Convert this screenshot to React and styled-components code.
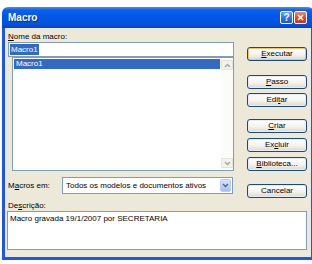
import React from 'react';
import styled, { createGlobalStyle } from 'styled-components';

const GlobalStyle = createGlobalStyle`
  body {
    margin: 0;
    background: #ffffff;
    overflow: hidden;
    font-family: "Liberation Sans", Arial, sans-serif;
    font-size: 8px;
    color: #000000;
  }
`;

const Page = styled.div`
  padding: 7px 0 0 2px;
`;

const Window = styled.div`
  width: 312px;
`;

const TitleBar = styled.div`
  height: 21px;
  display: flex;
  align-items: center;
  justify-content: space-between;
  padding: 0 7px 0 6px;
  border-radius: 6px 6px 0 0;
  background: linear-gradient(to bottom, #4a90f8 0%, #0d61ea 14%, #0057e6 45%, #0253df 80%, #0a44c8 100%);
`;

const TitleText = styled.span`
  color: #ffffff;
  font-weight: bold;
  font-size: 10px;
  text-shadow: 1px 1px 0 #0a2a8a;
`;

const TitleButtons = styled.div`
  display: flex;
  gap: 1px;
`;

const CaptionButton = styled.div`
  width: 13px;
  height: 13px;
  box-sizing: border-box;
  border: 1px solid #ffffff;
  border-radius: 2px;
  display: flex;
  align-items: center;
  justify-content: center;
  color: #ffffff;
  font-weight: bold;
  font-size: 10px;
  background: ${p => p.$close
    ? 'linear-gradient(to bottom, #f08a6e, #d8451f 60%, #c8381a)'
    : 'linear-gradient(to bottom, #6fa2fb, #2a6cf0 60%, #1b57de)'};
`;

const Frame = styled.div`
  background: #ece9d8;
  border: 3px solid #1f55ea;
  border-top: none;
  padding: 3px 0 7px 3px;
`;

const Main = styled.div`
  display: flex;
  gap: 13px;
`;

const LeftCol = styled.div`
  width: 226px;
  display: flex;
  flex-direction: column;
`;

const Label = styled.div`
  height: 11px;
  line-height: 11px;
  white-space: nowrap;
`;

const DescLabel = styled.div`
  margin-top: 3px;
  height: 10px;
  line-height: 10px;
  white-space: nowrap;
`;

const NameInput = styled.div`
  height: 15px;
  box-sizing: border-box;
  border: 1px solid #7f9db9;
  background: #ffffff;
  padding: 0 1px;
  display: flex;
  align-items: center;
`;

const Selected = styled.span`
  background: #316ac5;
  color: #ffffff;
  padding: 0 1px;
  line-height: 11px;
`;

const MacroList = styled.div`
  margin-left: 4px;
  width: 222px;
  height: 114px;
  box-sizing: border-box;
  border: 1px solid #7f9db9;
  background: #ffffff;
  display: flex;
`;

const ListItems = styled.div`
  flex: 1;
  padding: 1px;
`;

const ListItem = styled.div`
  height: 10px;
  line-height: 10px;
  padding-left: 2px;
  background: ${p => (p.$selected ? '#316ac5' : 'transparent')};
  color: ${p => (p.$selected ? '#ffffff' : '#000000')};
`;

const Scrollbar = styled.div`
  width: 12px;
  display: flex;
  flex-direction: column;
  justify-content: space-between;
  padding: 2px 0 2px;
  background: #fbfbf8;
`;

const ScrollArrow = styled.div`
  height: 8px;
  border: 1px solid #e4e4dc;
  border-radius: 1px;
  background: #f3f3ee;
  display: flex;
  align-items: center;
  justify-content: center;
`;

const ComboRow = styled.div`
  margin-top: 6px;
  display: flex;
  align-items: center;
`;

const ComboLabel = styled.div`
  width: 54px;
`;

const Combo = styled.div`
  width: 171px;
  height: 17px;
  box-sizing: border-box;
  border: 1px solid #7f9db9;
  background: #ffffff;
  display: flex;
  align-items: center;
`;

const ComboText = styled.span`
  flex: 1;
  padding-left: 3px;
  white-space: nowrap;
`;

const ComboButton = styled.div`
  width: 11px;
  height: 13px;
  margin-right: 1px;
  border-radius: 2px;
  border: 1px solid #b8cbf2;
  box-sizing: border-box;
  background: linear-gradient(to bottom, #d6e2fd, #b6cbf8 70%, #a5bdf3);
  display: flex;
  align-items: center;
  justify-content: center;
`;

const ButtonCol = styled.div`
  width: 60px;
  display: flex;
  flex-direction: column;
  padding-top: 16px;
`;

const Button = styled.div`
  height: 14px;
  margin-top: ${p => p.$gap || 0}px;
  box-sizing: border-box;
  border: 1px solid #1c4a7c;
  border-radius: 3px;
  background: linear-gradient(to bottom, #ffffff, #f4f3ee 55%, #dcd7cb);
  box-shadow: ${p => (p.$default ? 'inset 0 0 0 1px #f6c26a' : 'inset 0 0 0 1px #e6ecf7')};
  display: flex;
  align-items: center;
  justify-content: center;
  line-height: 10px;
`;

const DescBox = styled.div`
  margin-left: -1px;
  width: 300px;
  height: 39px;
  box-sizing: border-box;
  border: 1px solid #7f9db9;
  background: #ffffff;
  padding: 2px 2px;
  line-height: 10px;
`;

const Chevron = ({ dir = 'down', color = '#a7a69b' }) => (
  <svg width="7" height="5" viewBox="0 0 7 5">
    <polyline
      points={dir === 'down' ? '1,1 3.5,3.5 6,1' : '1,4 3.5,1.5 6,4'}
      fill="none"
      stroke={color}
      strokeWidth="1.4"
    />
  </svg>
);

const CloseGlyph = () => (
  <svg width="7" height="7" viewBox="0 0 7 7">
    <path d="M1,1 L6,6 M6,1 L1,6" stroke="#ffffff" strokeWidth="1.6" />
  </svg>
);

export default function App() {
  return (
    <Page>
      <GlobalStyle />
      <Window>
        <TitleBar>
          <TitleText>Macro</TitleText>
          <TitleButtons>
            <CaptionButton>?</CaptionButton>
            <CaptionButton $close><CloseGlyph /></CaptionButton>
          </TitleButtons>
        </TitleBar>
        <Frame>
          <Main>
            <LeftCol>
              <Label><u>N</u>ome da macro:</Label>
              <NameInput>
                <Selected>Macro1</Selected>
              </NameInput>
              <MacroList>
                <ListItems>
                  <ListItem $selected>Macro1</ListItem>
                </ListItems>
                <Scrollbar>
                  <ScrollArrow><Chevron dir="up" /></ScrollArrow>
                  <ScrollArrow><Chevron dir="down" /></ScrollArrow>
                </Scrollbar>
              </MacroList>
              <ComboRow>
                <ComboLabel>M<u>a</u>cros em:</ComboLabel>
                <Combo>
                  <ComboText>Todos os modelos e documentos ativos</ComboText>
                  <ComboButton><Chevron dir="down" color="#4d6185" /></ComboButton>
                </Combo>
              </ComboRow>
            </LeftCol>
            <ButtonCol>
              <Button $default><u>E</u>xecutar</Button>
              <Button $gap={14}><u>P</u>asso</Button>
              <Button $gap={4}>Edi<u>t</u>ar</Button>
              <Button $gap={12}><u>C</u>riar</Button>
              <Button $gap={5}>Ex<u>c</u>luir</Button>
              <Button $gap={5}><u>B</u>iblioteca...</Button>
              <Button $gap={13}>Cancelar</Button>
            </ButtonCol>
          </Main>
          <DescLabel>De<u>s</u>crição:</DescLabel>
          <DescBox>Macro gravada 19/1/2007 por SECRETARIA</DescBox>
        </Frame>
      </Window>
    </Page>
  );
}
